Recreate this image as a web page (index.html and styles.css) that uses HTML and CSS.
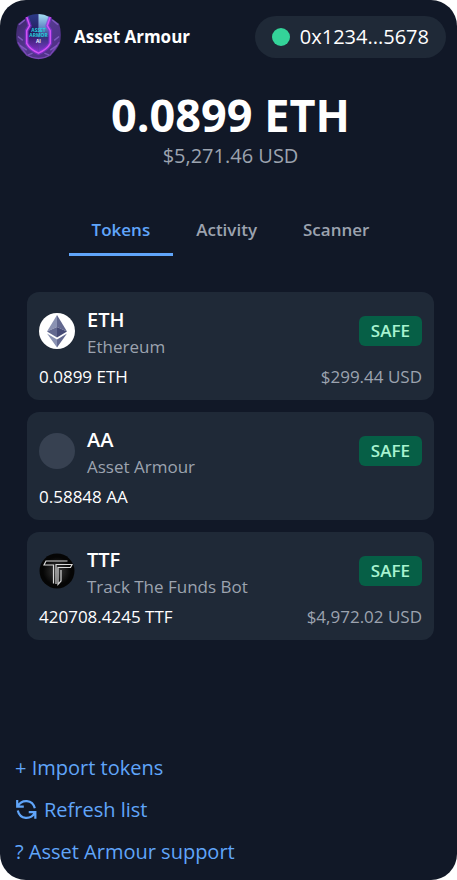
FILE: index.html
```html
<!DOCTYPE html>
<html lang="en">
<head>
    <meta charset="UTF-8">
    <meta name="viewport" content="width=device-width, initial-scale=1.0">
    <title>Asset Armour</title>
    <link rel="stylesheet" href="styles.css">
</head>
<body>
    <div class="wallet">

        <!-- Header -->
        <header class="header">
            <svg class="logo" viewBox="0 0 48 48" aria-hidden="true">
                <defs>
                    <linearGradient id="shell" x1="0" y1="0" x2="1" y2="1">
                        <stop offset="0" stop-color="#3a2466"/>
                        <stop offset="0.5" stop-color="#54388f"/>
                        <stop offset="1" stop-color="#4d2c80"/>
                    </linearGradient>
                    <linearGradient id="core" x1="0" y1="0" x2="0" y2="1">
                        <stop offset="0" stop-color="#2b3a86"/>
                        <stop offset="0.5" stop-color="#251a5c"/>
                        <stop offset="1" stop-color="#8a35d0"/>
                    </linearGradient>
                    <linearGradient id="shine" x1="0" y1="0" x2="0" y2="1">
                        <stop offset="0" stop-color="#a5e0f5"/>
                        <stop offset="0.35" stop-color="#5f86c4"/>
                        <stop offset="0.6" stop-color="#33337c"/>
                        <stop offset="1" stop-color="#8a35d0"/>
                    </linearGradient>
                </defs>
                <path d="M13 4 Q24 -1 35 4 L45 11 Q48 20 46 30 Q43 38 36 43 Q24 51 12 43 Q5 38 2 30 Q0 20 3 11 Z" fill="url(#shell)"/>
                <path d="M13 3 Q18 1 24 1 L24 41 Q15 37 12 31 L12 19 L15 13 Z" fill="url(#core)"/>
                <path d="M24 1 Q30 1 35 4 L33 13 L36 19 L36 31 Q33 37 24 41 Z" fill="url(#shine)"/>
                <path d="M4 12 L10 7 M3 24 L8 28 M5 33 L12 38 M13 43 L18 41 M44 12 L38 7 M45 24 L40 28 M43 33 L36 38 M35 43 L30 41" stroke="#7d58bd" stroke-width="1.5" fill="none"/>
                <path d="M3 30 L12 43 Q24 50 36 43 L45 30" stroke="#8a50c8" stroke-width="1.5" fill="none" opacity="0.7"/>
                <path d="M12 4 L15 13 L12 18 V31 Q15 37 24 41 Q33 37 36 31 V18 L33 13 L36 4" fill="none" stroke="#8a2fe0" stroke-width="4" opacity="0.6"/>
                <path d="M12 4 L15 13 L12 18 V31 Q15 37 24 41 Q33 37 36 31 V18 L33 13 L36 4" fill="none" stroke="#d552f5" stroke-width="1.5"/>
                <text x="24" y="19" class="logo-text">ASSET</text>
                <text x="24" y="25" class="logo-text">ARMOR</text>
                <text x="24" y="31" class="logo-text logo-text-ai">AI</text>
            </svg>
            <h1 class="brand">Asset Armour</h1>
            <button type="button" class="account">
                <span class="status-dot"></span>
                0x1234...5678
            </button>
        </header>

        <!-- Balance -->
        <section class="balance">
            <div class="balance-amount">0.0899 ETH</div>
            <div class="balance-usd">$5,271.46 USD</div>
        </section>

        <!-- Tabs -->
        <nav class="tabs">
            <button type="button" class="tab active">Tokens</button>
            <button type="button" class="tab">Activity</button>
            <button type="button" class="tab">Scanner</button>
        </nav>

        <!-- Token list -->
        <main class="token-list">
            <div class="token">
                <div class="token-top">
                    <svg class="token-icon" viewBox="0 0 36 36" aria-hidden="true">
                        <circle cx="18" cy="18" r="18" fill="#fff"/>
                        <path d="M18 2 L8 18.500 L18 14 Z" fill="#8a92b2"/>
                        <path d="M18 2 L28 18.500 L18 14 Z" fill="#62688f"/>
                        <path d="M18 14 L8 18.500 L18 24.500 Z" fill="#62688f"/>
                        <path d="M18 14 L28 18.500 L18 24.500 Z" fill="#454a75"/>
                        <path d="M8 20.500 L18 26.500 V34.500 Z" fill="#8a92b2"/>
                        <path d="M28 20.500 L18 26.500 V34.500 Z" fill="#62688f"/>
                    </svg>
                    <div class="token-info">
                        <div class="token-symbol">ETH</div>
                        <div class="token-name">Ethereum</div>
                    </div>
                    <span class="badge">SAFE</span>
                </div>
                <div class="token-bottom">
                    <span class="token-amount">0.0899 ETH</span>
                    <span class="token-value">$299.44 USD</span>
                </div>
            </div>

            <div class="token">
                <div class="token-top">
                    <span class="token-icon token-icon-empty"></span>
                    <div class="token-info">
                        <div class="token-symbol">AA</div>
                        <div class="token-name">Asset Armour</div>
                    </div>
                    <span class="badge">SAFE</span>
                </div>
                <div class="token-bottom">
                    <span class="token-amount">0.58848 AA</span>
                </div>
            </div>

            <div class="token">
                <div class="token-top">
                    <svg class="token-icon" viewBox="0 0 36 36" aria-hidden="true">
                        <defs>
                            <radialGradient id="ttf-bg">
                                <stop offset="0" stop-color="#3a3a3a"/>
                                <stop offset="0.8" stop-color="#050505"/>
                            </radialGradient>
                        </defs>
                        <circle cx="18" cy="18" r="17.500" fill="url(#ttf-bg)"/>
                        <g fill="none" stroke="#d8d8d8" stroke-width="1.200">
                            <path d="M28.500 8 H7 L5 12 H14.500 V30.500"/>
                            <path d="M17 31 V11.500 H33 L31.500 14.500 H19 V31.500 L22 28 V17"/>
                        </g>
                    </svg>
                    <div class="token-info">
                        <div class="token-symbol">TTF</div>
                        <div class="token-name">Track The Funds Bot</div>
                    </div>
                    <span class="badge">SAFE</span>
                </div>
                <div class="token-bottom">
                    <span class="token-amount">420708.4245 TTF</span>
                    <span class="token-value">$4,972.02 USD</span>
                </div>
            </div>
        </main>

        <!-- Footer links -->
        <footer class="footer">
            <a href="#" class="footer-link">+ Import tokens</a>
            <a href="#" class="footer-link">
                <svg class="refresh-icon" viewBox="0 0 20 20" aria-hidden="true">
                    <path d="M2 1 V7 H8 M2.500 6.500 C6 0 16 0 18 8.500 M18.500 18 V12 H12.500 M18 12.500 C14.500 19 4.500 19 2.500 10.500"/>
                </svg>
                Refresh list
            </a>
            <a href="#" class="footer-link">? Asset Armour support</a>
        </footer>
    </div>
</body>
</html>
```

FILE: styles.css
```css
* {
    box-sizing: border-box;
}

body {
    margin: 0;
    background-color: #fff;
    font-family: "Segoe UI", "Open Sans", "Noto Sans", sans-serif;
    color: #fff;
}

button {
    font-family: inherit;
    border: none;
    background: none;
    cursor: pointer;
}

.wallet {
    display: flex;
    flex-direction: column;
    min-height: 100vh;
    padding: 13px 11px 13px 15px;
    background-color: #111827;
    border-radius: 26px;
}

/* Header */
.header {
    display: flex;
    align-items: center;
}

.logo {
    width: 47px;
    height: 47px;
    margin-right: 12px;
}

.logo-text {
    font-size: 5px;
    font-weight: bold;
    fill: #25d0dc;
    text-anchor: middle;
}

.logo-text-ai {
    fill: #e8f4ff;
}

.brand {
    margin: 0;
    font-size: 17px;
    font-weight: 700;
}

.account {
    display: flex;
    align-items: center;
    gap: 10px;
    margin-left: auto;
    padding: 0 17px;
    height: 42px;
    border-radius: 21px;
    background-color: #1f2937;
    color: #fff;
    font-size: 20px;
}

.status-dot {
    width: 18px;
    height: 18px;
    border-radius: 50%;
    background-color: #34d399;
}

/* Balance */
.balance {
    margin-top: 29px;
    text-align: center;
}

.balance-amount {
    font-size: 45px;
    font-weight: 700;
    line-height: 52px;
}

.balance-usd {
    font-size: 20px;
    line-height: 30px;
    color: #9ca3af;
}

/* Tabs */
.tabs {
    display: flex;
    justify-content: center;
    margin-top: 35px;
}

.tab {
    padding: 12px 23px 11px;
    border-bottom: 3px solid transparent;
    font-size: 17px;
    font-weight: 600;
    line-height: 24px;
    color: #9ca3af;
}

.tab.active {
    color: #60a5fa;
    border-bottom-color: #60a5fa;
}

/* Token list */
.token-list {
    display: flex;
    flex-direction: column;
    gap: 12px;
    padding: 36px 12px;
}

.token {
    padding: 12px;
    border-radius: 12px;
    background-color: #1f2937;
}

.token-top {
    display: flex;
    align-items: center;
}

.token-icon {
    flex-shrink: 0;
    width: 36px;
    height: 36px;
    margin-right: 12px;
}

.token-icon-empty {
    border-radius: 50%;
    background-color: #374151;
}

.token-symbol {
    font-size: 20px;
    font-weight: 600;
    line-height: 32px;
}

.token-name {
    font-size: 17px;
    line-height: 22px;
    color: #9ca3af;
}

.badge {
    margin-left: auto;
    padding: 3px 12px;
    border-radius: 6px;
    background-color: #065f46;
    color: #a7f3d0;
    font-size: 17px;
    font-weight: 600;
    line-height: 24px;
}

.token-bottom {
    display: flex;
    justify-content: space-between;
    margin-top: 8px;
    font-size: 17px;
    line-height: 22px;
}

.token-value {
    color: #9ca3af;
}

/* Footer */
.footer {
    display: flex;
    flex-direction: column;
    align-items: flex-start;
    gap: 12px;
    margin-top: auto;
}

.footer-link {
    display: flex;
    align-items: center;
    gap: 7px;
    font-size: 20px;
    line-height: 30px;
    color: #60a5fa;
    text-decoration: none;
}

.refresh-icon {
    width: 22px;
    height: 22px;
    fill: none;
    stroke: #60a5fa;
    stroke-width: 2;
}
```
